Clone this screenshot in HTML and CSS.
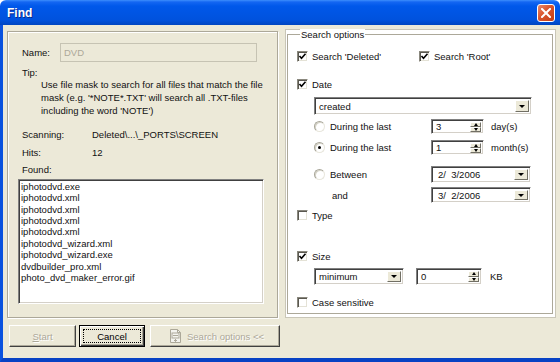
FILE: index.html
```html
<!DOCTYPE html>
<html lang="en">
<head>
    <meta charset="UTF-8">
    <title>Find</title>
    <link rel="stylesheet" href="styles.css">
</head>
<body>
    <div class="window">
        <div class="titlebar">
            <span class="title">Find</span>
            <div class="close-btn">
                <svg width="10" height="10" viewBox="0 0 10 10"><path d="M1 1 L9 9 M9 1 L1 9" stroke="#fff" stroke-width="2" stroke-linecap="square"/></svg>
            </div>
        </div>
        <div class="frame">
            <div class="panes">
                <div class="left-pane">
                    <div class="name-row">
                        <span class="name-label">Name:</span>
                        <input class="name-input" type="text" value="DVD" disabled>
                    </div>
                    <div class="tip">
                        <div>Tip:</div>
                        <div class="tip-text">Use file mask to search for all files that match the file<br>mask (e.g. '*NOTE*.TXT' will search all .TXT-files<br>including the word 'NOTE')</div>
                    </div>
                    <div class="info">
                        <div class="info-row"><span class="info-label">Scanning:</span><span>Deleted\...\_PORTS\SCREEN</span></div>
                        <div class="info-row"><span class="info-label">Hits:</span><span>12</span></div>
                        <div class="info-row"><span class="info-label">Found:</span></div>
                    </div>
                    <div class="found-list">
                        <div>iphotodvd.exe</div>
                        <div>iphotodvd.xml</div>
                        <div>iphotodvd.xml</div>
                        <div>iphotodvd.xml</div>
                        <div>iphotodvd.xml</div>
                        <div>iphotodvd_wizard.xml</div>
                        <div>iphotodvd_wizard.exe</div>
                        <div>dvdbuilder_pro.xml</div>
                        <div>photo_dvd_maker_error.gif</div>
                    </div>
                </div>
                <div class="right-pane">
                    <fieldset class="group">
                        <legend>Search options</legend>
                        <div class="opts">
                            <div class="row row-top">
                                <div class="check-item wide"><span class="check"><svg width="9" height="9" viewBox="0 0 9 9"><path d="M1.5 4 L3.5 6.2 L7.5 1.8" fill="none" stroke="#000" stroke-width="1.6"/></svg></span><span>Search 'Deleted'</span></div>
                                <div class="check-item"><span class="check"><svg width="9" height="9" viewBox="0 0 9 9"><path d="M1.5 4 L3.5 6.2 L7.5 1.8" fill="none" stroke="#000" stroke-width="1.6"/></svg></span><span>Search 'Root'</span></div>
                            </div>
                            <div class="row row-date">
                                <div class="check-item"><span class="check"><svg width="9" height="9" viewBox="0 0 9 9"><path d="M1.5 4 L3.5 6.2 L7.5 1.8" fill="none" stroke="#000" stroke-width="1.6"/></svg></span><span>Date</span></div>
                            </div>
                            <div class="row row-combo indent">
                                <div class="field combo combo-full"><span class="field-text">created</span><span class="drop-btn"></span></div>
                            </div>
                            <div class="row row-r1 indent">
                                <span class="radio"></span><span class="radio-label">During the last</span>
                                <div class="field spin"><span class="field-text">3</span><span class="spin-btns"><span class="spin-up"></span><span class="spin-down"></span></span></div>
                                <span class="unit">day(s)</span>
                            </div>
                            <div class="row row-r2 indent">
                                <span class="radio on"></span><span class="radio-label">During the last</span>
                                <div class="field spin"><span class="field-text">1</span><span class="spin-btns"><span class="spin-up"></span><span class="spin-down"></span></span></div>
                                <span class="unit">month(s)</span>
                            </div>
                            <div class="row row-r3 indent">
                                <span class="radio"></span><span class="radio-label">Between</span>
                                <div class="field combo date"><span class="field-text date-text">2/  3/2006</span><span class="drop-btn"></span></div>
                            </div>
                            <div class="row row-and indent">
                                <span class="radio-gap"></span><span class="radio-label and">and</span>
                                <div class="field combo date"><span class="field-text date-text">3/  2/2006</span><span class="drop-btn"></span></div>
                            </div>
                            <div class="row row-type">
                                <div class="check-item"><span class="check"></span><span>Type</span></div>
                            </div>
                            <div class="row row-size">
                                <div class="check-item"><span class="check"><svg width="9" height="9" viewBox="0 0 9 9"><path d="M1.5 4 L3.5 6.2 L7.5 1.8" fill="none" stroke="#000" stroke-width="1.6"/></svg></span><span>Size</span></div>
                            </div>
                            <div class="row row-min indent">
                                <div class="field combo combo-min"><span class="field-text">minimum</span><span class="drop-btn"></span></div>
                                <div class="field spin spin-kb"><span class="field-text">0</span><span class="spin-btns"><span class="spin-up"></span><span class="spin-down"></span></span></div>
                                <span class="unit kb">KB</span>
                            </div>
                            <div class="row row-case">
                                <div class="check-item"><span class="check"></span><span>Case sensitive</span></div>
                            </div>
                        </div>
                    </fieldset>
                </div>
            </div>
            <div class="buttons">
                <button class="btn btn-start" disabled><u>S</u>tart</button>
                <button class="btn btn-cancel">Cancel</button>
                <button class="btn btn-options" disabled>
                    <svg width="11" height="14" viewBox="0 0 11 14">
                        <path d="M0.5 0.5 H7.5 L10.5 3.5 V13.5 H0.5 Z" fill="#f4f3ee" stroke="#aca899"/>
                        <path d="M7.5 0.5 V3.5 H10.5" fill="none" stroke="#aca899"/>
                        <rect x="2" y="4" width="7" height="5" fill="none" stroke="#aca899"/>
                        <path d="M3 6.5 H8 M5.5 10 V12.5 M4 11 L5.5 12.5 L7 11" stroke="#aca899" fill="none"/>
                    </svg>
                    <span>Search options &lt;&lt;</span>
                </button>
            </div>
        </div>
    </div>
</body>
</html>
```

FILE: styles.css
```css
* {
    box-sizing: border-box;
}
body {
    margin: 0;
    background: #fff;
    font-family: 'Liberation Sans', Arial, sans-serif;
    font-size: 9.5px;
    color: #111;
}
.window {
    width: 560px;
    height: 362px;
    display: flex;
    flex-direction: column;
}
.titlebar {
    height: 25px;
    flex: none;
    display: flex;
    align-items: center;
    justify-content: space-between;
    padding: 0 5px 0 7px;
    border-radius: 6px 6px 0 0;
    background: linear-gradient(to bottom, #3d8efc 0, #1466f2 2px, #0058ea 6px, #0055e4 50%, #0052dd 80%, #0045c0 100%);
}
.title {
    color: #fff;
    font-weight: bold;
    font-size: 12px;
    text-shadow: 1px 1px #0a2a8a;
}
.close-btn {
    width: 18px;
    height: 18px;
    border: 1px solid #fff;
    border-radius: 3px;
    background: linear-gradient(135deg, #e98a6c 0, #d9542c 45%, #c33d14 100%);
    display: flex;
    align-items: center;
    justify-content: center;
}
.frame {
    flex: 1;
    background: #ece9d8;
    border-left: 3px solid #0a52df;
    border-bottom: 4px solid #0842c4;
    padding: 4px 0 0 4px;
    display: flex;
    flex-direction: column;
}
.panes {
    display: flex;
    align-items: flex-start;
}

/* left side */
.left-pane {
    width: 271px;
    height: 287px;
    margin-top: 2px;
    border: 1px solid #aca899;
    box-shadow: inset 1px 1px #fff, 1px 1px #fff;
    padding: 11px 0 0 10px;
}
.name-row {
    display: flex;
    align-items: center;
    height: 19px;
    margin-left: 4px;
}
.name-label {
    width: 38px;
}
.name-input {
    width: 197px;
    height: 19px;
    margin: 0;
    padding: 0 3px;
    font: inherit;
    color: #aca899;
    background: #ece9d8;
    border: 1px solid #c6c3b3;
}
.tip {
    margin: 4.6px 0 0 4px;
    line-height: 12.7px;
}
.tip-text {
    padding-left: 19px;
}
.info {
    margin: 8.8px 0 0 4px;
}
.info-row {
    display: flex;
    align-items: center;
    height: 17.5px;
}
.info-label {
    width: 70px;
}
.found-list {
    width: 246px;
    height: 125px;
    background: #fff;
    border: 1px solid;
    border-color: #808080 #fff #fff #808080;
    box-shadow: inset 1px 1px #404040, inset -1px -1px #d4d0c8;
    padding: 1px 0 0 2px;
    line-height: 11.4px;
}

/* right side */
.right-pane {
    width: 271px;
    height: 289px;
    margin-left: 7px;
    background: #fff;
    border: 1px solid #c9c6b7;
}
.group {
    margin: -1px 2px 0 1px;
    height: 285px;
    padding: 0 0 0 9px;
    border: 1px solid #aca899;
}
.group legend {
    padding: 0 1px;
    margin-left: 3px;
    line-height: 11px;
    background: #fff;
}
.opts {
    display: flex;
    flex-direction: column;
}
.row {
    display: flex;
    align-items: center;
}
.indent {
    padding-left: 17px;
}
.row-top { margin-top: 9px; height: 14px; }
.row-date { margin-top: 14px; height: 14px; }
.row-combo { margin-top: 6px; height: 18px; }
.row-r1 { margin-top: 4px; height: 15px; }
.row-r2 { margin-top: 6px; height: 15px; }
.row-r3 { margin-top: 11px; height: 17px; }
.row-and { margin-top: 4px; height: 16px; }
.row-type { margin-top: 5px; height: 14px; }
.row-size { margin-top: 27px; height: 14px; }
.row-min { margin-top: 5px; height: 17px; }
.row-case { margin-top: 10px; height: 14px; }

.check-item {
    display: flex;
    align-items: center;
    gap: 4px;
}
.check-item.wide {
    width: 122px;
}
.check {
    width: 11px;
    height: 11px;
    flex: none;
    background: #fff;
    border: 1px solid;
    border-color: #8a887e #fff #fff #8a887e;
    box-shadow: inset 1px 1px #5a5850, inset -1px -1px #e4e2d6;
    display: flex;
}
.check svg {
    display: block;
}
.radio, .radio-gap {
    width: 11px;
    height: 11px;
    flex: none;
}
.radio {
    border-radius: 50%;
    background: #fff;
    border: 1px solid;
    border-color: #a8a699 #e8e6dc #e8e6dc #a8a699;
    box-shadow: inset 1px 1px #d6d4c8;
    display: flex;
    align-items: center;
    justify-content: center;
}
.radio.on::after {
    content: "";
    width: 3px;
    height: 3px;
    border-radius: 50%;
    background: #000;
}
.radio-label {
    width: 106px;
    padding-left: 5px;
}
.radio-label.and {
    padding-left: 7px;
}
.field {
    display: flex;
    align-items: center;
    background: #fff;
    border: 1px solid;
    border-color: #808080 #fff #fff #808080;
    box-shadow: inset 1px 1px #404040, inset -1px -1px #d4d0c8;
    padding: 2px;
}
.field-text {
    flex: 1;
    padding-left: 2px;
}
.date-text {
    padding-left: 4px;
    white-space: pre;
}
.combo-full {
    width: 218px;
    height: 18px;
}
.combo-min {
    width: 90px;
    height: 17px;
}
.date {
    width: 100px;
    height: 17px;
}
.row-and .date {
    height: 16px;
}
.spin {
    width: 53px;
    height: 15px;
}
.spin-kb {
    width: 66px;
    height: 17px;
    margin-left: 12px;
}
.drop-btn {
    width: 14px;
    height: 100%;
    background: #ece9d8;
    border: 1px solid;
    border-color: #fff #716f64 #716f64 #fff;
    display: flex;
    align-items: center;
    justify-content: center;
}
.drop-btn::after {
    content: "";
    border-left: 3px solid transparent;
    border-right: 3px solid transparent;
    border-top: 3px solid #000;
}
.spin-btns {
    width: 11px;
    height: 100%;
    display: flex;
    flex-direction: column;
}
.spin-up, .spin-down {
    flex: 1;
    background: #ece9d8;
    border: 1px solid;
    border-color: #fff #716f64 #716f64 #fff;
    display: flex;
    align-items: center;
    justify-content: center;
}
.spin-up::after, .spin-down::after {
    content: "";
    border-left: 2.5px solid transparent;
    border-right: 2.5px solid transparent;
}
.spin-up::after {
    border-bottom: 3px solid #000;
}
.spin-down::after {
    border-top: 3px solid #000;
}
.unit {
    margin-left: 7px;
}
.unit.kb {
    margin-left: 8px;
}

/* buttons */
.buttons {
    display: flex;
    margin: 7px 0 0 2px;
}
.btn {
    height: 22px;
    margin: 0;
    padding: 0;
    font: inherit;
    color: #000;
    background: #ece9d8;
    border: 1px solid;
    border-color: #fff #404040 #404040 #fff;
    box-shadow: inset -1px -1px #aca899;
    display: flex;
    align-items: center;
    justify-content: center;
    position: relative;
}
.btn[disabled] {
    color: #aca899;
    text-shadow: 1px 1px #fff;
}
.btn-start {
    width: 67px;
}
.btn-cancel {
    width: 66px;
    margin-left: 3px;
    border: 1px solid #000;
    box-shadow: inset 1px 1px #fff, inset -1px -1px #404040, inset -2px -2px #aca899;
}
.btn-cancel::after {
    content: "";
    position: absolute;
    inset: 3px;
    border: 1px dotted #000;
}
.btn-options {
    width: 130px;
    margin-left: 5px;
    justify-content: flex-start;
    padding-left: 19px;
    gap: 6px;
}
```
